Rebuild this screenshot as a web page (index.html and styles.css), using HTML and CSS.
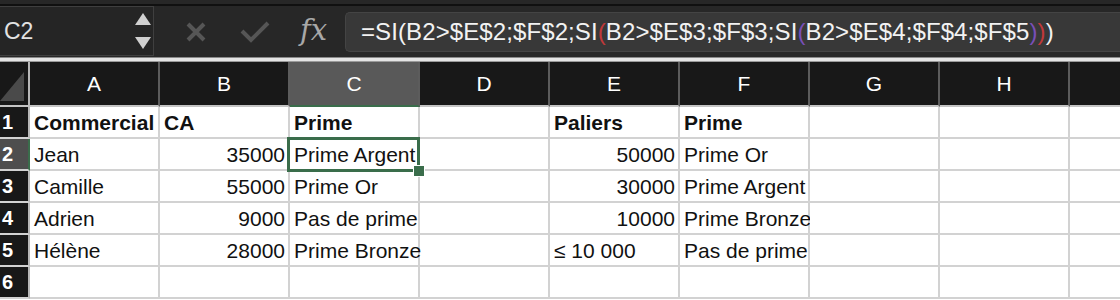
FILE: index.html
```html
<!DOCTYPE html>
<html lang="fr">
<head>
<meta charset="utf-8">
<link rel="stylesheet" href="styles.css">
</head>
<body>
<div class="app">
  <div class="topstrip"></div>
  <div class="toolbar">
    <div class="namebox">
      <span class="ref">C2</span>
      <div class="spin">
        <svg width="16" height="12" viewBox="0 0 16 12"><polygon points="8,0 16,12 0,12" fill="#d0d0d0"/></svg>
        <svg width="16" height="12" viewBox="0 0 16 12"><polygon points="0,0 16,0 8,12" fill="#d0d0d0"/></svg>
      </div>
    </div>
    <div class="actions">
      <svg class="ic-x" width="22" height="20" viewBox="0 0 22 20"><path d="M3 2 L19 18 M19 2 L3 18" stroke="#565656" stroke-width="4" stroke-linecap="butt"/></svg>
      <svg class="ic-ok" width="30" height="22" viewBox="0 0 30 22"><path d="M2 10 L11 19 L28 2" stroke="#565656" stroke-width="4" fill="none"/></svg>
      <span class="fx">fx</span>
    </div>
    <div class="formula">=SI(B2&gt;$E$2;$F$2;SI<span class="p1">(</span>B2&gt;$E$3;$F$3;SI<span class="p2">(</span>B2&gt;$E$4;$F$4;$F$5<span class="p2">)</span><span class="p1">)</span>)</div>
  </div>
  <div class="sep"></div>
  <div class="grid">
    <div class="h corner"><svg width="25" height="30" viewBox="0 0 25 30"><polygon points="0,29 24,29 24,0" fill="#4a4a4a"/></svg></div>
    <div class="h col">A</div>
    <div class="h col">B</div>
    <div class="h col sel">C</div>
    <div class="h col">D</div>
    <div class="h col">E</div>
    <div class="h col">F</div>
    <div class="h col">G</div>
    <div class="h col">H</div>
    <div class="h col last"></div>

    <div class="rh">1</div>
    <div class="c b">Commercial</div>
    <div class="c b">CA</div>
    <div class="c b">Prime</div>
    <div class="c"></div>
    <div class="c b">Paliers</div>
    <div class="c b">Prime</div>
    <div class="c"></div>
    <div class="c"></div>
    <div class="c last"></div>

    <div class="rh sel">2</div>
    <div class="c">Jean</div>
    <div class="c n">35000</div>
    <div class="c active">Prime Argent</div>
    <div class="c"></div>
    <div class="c n">50000</div>
    <div class="c">Prime Or</div>
    <div class="c"></div>
    <div class="c"></div>
    <div class="c last"></div>

    <div class="rh">3</div>
    <div class="c">Camille</div>
    <div class="c n">55000</div>
    <div class="c">Prime Or</div>
    <div class="c"></div>
    <div class="c n">30000</div>
    <div class="c">Prime Argent</div>
    <div class="c"></div>
    <div class="c"></div>
    <div class="c last"></div>

    <div class="rh">4</div>
    <div class="c">Adrien</div>
    <div class="c n">9000</div>
    <div class="c">Pas de prime</div>
    <div class="c"></div>
    <div class="c n">10000</div>
    <div class="c">Prime Bronze</div>
    <div class="c"></div>
    <div class="c"></div>
    <div class="c last"></div>

    <div class="rh">5</div>
    <div class="c">Hélène</div>
    <div class="c n">28000</div>
    <div class="c over">Prime Bronze</div>
    <div class="c"></div>
    <div class="c">≤ 10 000</div>
    <div class="c">Pas de prime</div>
    <div class="c"></div>
    <div class="c"></div>
    <div class="c last"></div>

    <div class="rh">6</div>
    <div class="c"></div>
    <div class="c"></div>
    <div class="c"></div>
    <div class="c"></div>
    <div class="c"></div>
    <div class="c"></div>
    <div class="c"></div>
    <div class="c"></div>
    <div class="c last"></div>
  </div>
</div>
</body>
</html>
```

FILE: styles.css
```css
* { box-sizing: border-box; }
html, body { margin: 0; padding: 0; background: #ffffff; }
body { width: 1120px; height: 300px; overflow: hidden; font-family: "Liberation Sans", Arial, sans-serif; }

.app { width: 1120px; }

.topstrip {
  height: 6px;
  background: #272727;
  border-bottom: 2px solid #101010;
}

.toolbar {
  height: 51px;
  background: #272727;
  display: flex;
  align-items: stretch;
}

.namebox {
  width: 154px;
  height: 50px;
  border: 1px solid #3f3f3f;
  border-left: none;
  background: #252525;
  display: flex;
  align-items: center;
  justify-content: space-between;
  padding: 0 2px 0 4px;
}
.ref { color: #e2e2e2; font-size: 23px; }
.spin { display: flex; flex-direction: column; gap: 12px; }

.actions {
  width: 191px;
  display: flex;
  align-items: center;
  padding-left: 31px;
}
.ic-x { margin-top: 1px; }
.ic-ok { margin-left: 33px; margin-top: 1px; }
.fx {
  margin-left: 30px;
  color: #a8a8a8;
  font-family: "DejaVu Serif", "Liberation Serif", serif;
  font-style: italic;
  font-size: 29px;
  margin-top: -3px;
}

.formula {
  flex: 1;
  margin: 6px 0 5px 0;
  background: #383838;
  border: 1px solid #444;
  border-right: none;
  border-radius: 5px 0 0 5px;
  color: #f2f2f2;
  font-size: 24px;
  letter-spacing: 0.1px;
  display: flex;
  align-items: center;
  padding-left: 15px;
  white-space: nowrap;
}
.p1 { color: #c0393a; }
.p2 { color: #7a4fb8; }

.sep {
  height: 5px;
  background: #e4e4e4;
  border-top: 1px solid #8a8a8a;
  border-bottom: 1px solid #9a9a9a;
}

.grid {
  display: grid;
  grid-template-columns: 30px repeat(8, 130px) 1fr;
  grid-template-rows: 45px repeat(6, 32px);
}

.h {
  background: #181818;
  border-right: 2px solid #5c5c5c;
  border-bottom: 2px solid #c4c4c4;
  color: #ffffff;
  font-size: 21px;
  display: flex;
  align-items: center;
  justify-content: center;
}
.h.corner {
  border-right: 2px solid #b8b8b8;
  align-items: flex-end;
  justify-content: flex-start;
  padding-bottom: 3px;
}
.h.sel { background: #595959; border-bottom-color: #3a6d4b; }
.h.last { border-right: none; }

.rh {
  background: #181818;
  border-right: 2px solid #b8b8b8;
  border-bottom: 2px solid #d2d2d2;
  color: #ffffff;
  font-weight: bold;
  font-size: 20px;
  display: flex;
  align-items: center;
  padding-left: 2px;
}
.rh.sel { background: #4e4e4e; border-right-color: #3a6d4b; }

.c {
  background: #ffffff;
  border-right: 2px solid #d2d2d2;
  border-bottom: 2px solid #d2d2d2;
  color: #111111;
  font-size: 21px;
  display: flex;
  align-items: center;
  padding: 1px 3px 0 4px;
  white-space: nowrap;
  position: relative;
}
.c.b { font-weight: bold; }
.c.n { justify-content: flex-end; }
.c.last { border-right: none; }
.c.over { overflow: visible; z-index: 1; }

.c.active { z-index: 2; }
.c.active::after {
  content: "";
  position: absolute;
  left: -3px;
  top: -2px;
  right: -2px;
  bottom: -3px;
  border: 3px solid #3a6d4b;
}
.c.active::before {
  content: "";
  position: absolute;
  right: -7px;
  bottom: -8px;
  width: 10px;
  height: 10px;
  background: #3a6d4b;
  border: 1px solid #ffffff;
  z-index: 3;
}
```
